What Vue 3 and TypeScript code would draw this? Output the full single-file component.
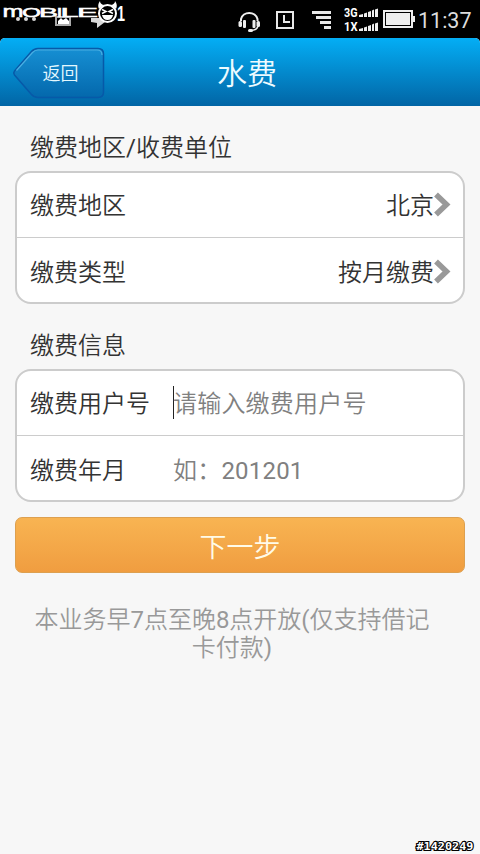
<script setup lang="ts">
import { ref } from 'vue'

interface Choice {
  label: string
  value: string
}
interface Field {
  label: string
  hint: string
  active: boolean
}
interface Letter {
  char: string
  x: number
  width: number
  size: number
}

const choices = ref<Choice[]>([
  { label: '缴费地区', value: '北京' },
  { label: '缴费类型', value: '按月缴费' },
])
const fields = ref<Field[]>([
  { label: '缴费用户号', hint: '请输入缴费用户号', active: true },
  { label: '缴费年月', hint: '如：201201', active: false },
])
const networks: string[] = ['3G', '1X']
const brand: Letter[] = [
  { char: 'm', x: 2.5, width: 21, size: 16.5 },
  { char: 'O', x: 22, width: 19, size: 12.5 },
  { char: 'B', x: 39, width: 19, size: 12.5 },
  { char: 'I', x: 56.5, width: 6, size: 12.5 },
  { char: 'L', x: 60.5, width: 18, size: 12.5 },
  { char: 'E', x: 77, width: 21, size: 12.5 },
]
</script>

<template>
  <div class="screen">
    <div class="status">
      <svg class="logo" width="130" height="30" viewBox="0 0 130 30">
        <g fill="#d8d8d8">
          <circle cx="18" cy="19" r="2" /><circle cx="26" cy="19" r="2" /><circle cx="34" cy="19" r="2" />
          <path d="M91 18h10l4 4-4 3-4 3v-5l-6-1z" />
        </g>
        <path d="M56 17h14v8H56z" fill="none" stroke="#aaa" stroke-width="2" />
        <path d="M58 24v-3l3-3 2 2 3-2 3 3v3z" fill="#fff" />
        <text
          v-for="l in brand"
          :key="l.char"
          class="brand"
          :x="l.x"
          y="17"
          :font-size="l.size"
          :textLength="l.width"
          lengthAdjust="spacingAndGlyphs"
        >{{ l.char }}</text>
        <circle cx="107.500" cy="13.500" r="8.500" fill="#000" stroke="#fff" stroke-width="2" />
        <path d="M99 9q-2-4 1-8 0 3 4 4M116 9q2-4-1-8 0 3-4 4" fill="#fff" />
        <path d="M102 9.500l4 2-4 2M113 9.500l-4 2 4 2" fill="none" stroke="#fff" stroke-width="1.500" />
        <path d="M102 15h11q-1 5-5.500 5t-5.500-5z" fill="#fff" />
        <text class="one" x="117" y="20.500" textLength="8" lengthAdjust="spacingAndGlyphs">1</text>
      </svg>
      <div class="tray">
        <svg class="headset" width="24" height="24" viewBox="0 0 24 24" fill="none" stroke="#eee">
          <path d="M3 12V10a8.500 8 0 0 1 16.500 0v2" stroke-width="2" />
          <path d="M20 16q0 5-7 5.500" stroke-width="1.500" />
          <rect x="0.500" y="12" width="3.500" height="6" rx="1.500" fill="#eee" stroke="none" />
          <rect x="5" y="11" width="3" height="8" rx="1" fill="#eee" stroke="none" />
          <rect x="14.500" y="11" width="3" height="8" rx="1" fill="#eee" stroke="none" />
          <rect x="18.500" y="12" width="3.500" height="6" rx="1.500" fill="#eee" stroke="none" />
          <rect x="10" y="20" width="5" height="3" rx="1.500" fill="#eee" stroke="none" />
        </svg>
        <svg class="clock" width="18" height="18" viewBox="0 0 18 18" fill="none" stroke="#e8e8e8" stroke-width="2">
          <path d="M1 1h16v16H1zM8 4v7h6" />
        </svg>
        <svg class="bars" width="20" height="18" viewBox="0 0 20 18" fill="#e8e8e8">
          <path d="M0 0h19v3H0zM4 5h15v3H4zM8 10h11v3H8zM12 15h7v3h-7z" />
        </svg>
        <div class="nets">
          <div v-for="n in networks" :key="n" class="net">
            <svg width="36" height="14" viewBox="0 0 36 14">
              <text class="net-name" x="0" y="11" textLength="13.500" lengthAdjust="spacingAndGlyphs">{{ n }}</text>
              <path d="M15 11v-2l4-1v3zM20 11V7.500l3-1V11zM24 11V6l3-1v6zM28 11V4.500l2-1V11zM31 11V3.500l3-1V11z" fill="#eee" />
            </svg>
          </div>
        </div>
        <svg class="battery" width="32" height="18" viewBox="0 0 32 18">
          <path d="M1 1h28v16H1z" fill="none" stroke="#eee" stroke-width="2" />
          <path d="M3 3h24v12H3zM29 6h3v6h-3z" fill="#eee" />
          <path d="M2.500 2.500h25v13h-25z" fill="none" stroke="#000" />
        </svg>
        <span class="time">11:37</span>
      </div>
    </div>

    <header class="header">
      <button class="back" type="button">
        <svg class="back-shape" width="94" height="54" viewBox="0 0 94 54">
          <defs>
            <linearGradient id="backFill" x1="0" y1="0" x2="0" y2="1">
              <stop offset="0" stop-color="#168fd3" />
              <stop offset="1" stop-color="#0468ac" />
            </linearGradient>
          </defs>
          <path d="M2.500 25Q1 27 2.500 29L19 48Q22 51.500 26 51.500H86Q91.500 51.500 91.500 46V8Q91.500 2.500 86 2.500H26Q22 2.500 19 6Z" fill="url(#backFill)" stroke="#0759a8" stroke-width="1.500" />
          <path d="M4.500 24.500L20.500 6.500Q23 4 26 4H85Q90 4 90 9" fill="none" stroke="#49aee2" stroke-width="1.200" />
        </svg>
        <span class="back-text">返回</span>
      </button>
      <h1 class="title">水费</h1>
    </header>

    <main class="content">
      <h2 class="caption">缴费地区/收费单位</h2>
      <section class="card">
        <div v-for="c in choices" :key="c.label" class="row">
          <span class="label">{{ c.label }}</span>
          <span class="value">{{ c.value }}</span>
          <svg class="chevron" width="17" height="26" viewBox="0 0 17 26">
            <path d="M2 2.500L12.500 12.500 2 22.500" fill="none" stroke="#999" stroke-width="5.500" />
          </svg>
        </div>
      </section>

      <h2 class="caption">缴费信息</h2>
      <section class="card">
        <div v-for="f in fields" :key="f.label" class="row">
          <span class="label field-label">{{ f.label }}</span>
          <span v-if="f.active" class="caret"></span>
          <span class="hint">{{ f.hint }}</span>
        </div>
      </section>

      <button class="next" type="button">下一步</button>
      <p class="note">本业务早7点至晚8点开放(仅支持借记<br />卡付款)</p>
    </main>

    <footer class="stamp">
      <svg width="66" height="16" viewBox="0 0 66 16">
        <text class="stamp-text" x="2.500" y="12" textLength="57" lengthAdjust="spacingAndGlyphs">#1420249</text>
      </svg>
    </footer>
  </div>
</template>

<style>
body {
  background: #000;
}
</style>

<style scoped>
.screen {
  width: 480px;
  height: 854px;
  overflow: hidden;
  display: flex;
  flex-direction: column;
  background: #f7f7f7;
  color: #333;
  font-family: Roboto, 'Noto Sans CJK SC DemiLight', 'Noto Sans CJK SC', sans-serif;
  font-weight: 400;
}
svg {
  display: block;
  flex: none;
}
button {
  font: inherit;
  border: 0;
  padding: 0;
}
.status {
  height: 38px;
  flex: none;
  display: flex;
  justify-content: space-between;
  background: #000;
}
.brand {
  font-family: 'Liberation Sans', sans-serif;
  fill: #fff;
  stroke: #fff;
  stroke-width: 0.5px;
}
.one {
  font: 700 22px 'Liberation Sans', sans-serif;
  fill: #fff;
}
.tray {
  width: 242px;
  display: flex;
}
.headset {
  margin-top: 9px;
}
.clock {
  margin: 11px 0 0 14px;
}
.bars {
  margin: 11px 0 0 18px;
}
.nets {
  width: 36px;
  margin: 6px 0 0 12px;
}
.net {
  height: 14px;
}
.net-name {
  font: 700 12px Roboto, sans-serif;
  fill: #fff;
}
.battery {
  margin: 10px 0 0 3px;
}
.time {
  margin-left: 3px;
  font-size: 21.5px;
  line-height: 42px;
  color: #ddd;
}
.header {
  height: 68px;
  flex: none;
  display: grid;
  grid-template-columns: 110px 1fr 96px;
  align-items: center;
  background: linear-gradient(#04aef5, #0265a5);
  border-radius: 5px 5px 0 0;
  box-shadow: 0 -5px 0 #000;
  color: #edfbff;
}
.back {
  display: grid;
  margin-left: 12px;
  margin-top: -1px;
  width: 94px;
  height: 54px;
  background: none;
  color: #e4f8ff;
}
.back > * {
  grid-area: 1 / 1;
}
.back-text {
  font-size: 18px;
  line-height: 54px;
  padding: 1px 0 0 3px;
}
.title {
  margin: 0;
  padding-top: 2px;
  text-align: center;
  font-size: 30px;
  font-weight: 400;
  line-height: 68px;
}
.content {
  flex: 1;
  padding: 0 15px;
}
.caption {
  margin: 22px 15px 3px;
  height: 40px;
  line-height: 40px;
  font-size: 24px;
  font-weight: 400;
}
.card {
  height: 133px;
  box-sizing: border-box;
  border: 2px solid #ccc;
  border-radius: 16px;
  background: #fff;
}
.row {
  display: flex;
  align-items: center;
  height: 64px;
  padding: 3px 12px 0 13px;
  box-sizing: border-box;
  font-size: 24px;
  line-height: 35px;
}
.row + .row {
  height: 65px;
  padding-top: 6px;
  border-top: 1px solid #ccc;
}
.value {
  margin-left: auto;
}
.chevron {
  margin-top: -3px;
}
.field-label {
  width: 143px;
}
.caret {
  width: 1px;
  height: 33px;
  margin: -4px -1px 0 0;
  background: #222;
}
.hint {
  color: #808080;
  letter-spacing: 0.2px;
}
.next {
  display: block;
  width: 450px;
  height: 56px;
  margin-top: 15px;
  box-sizing: border-box;
  border: 1px solid #dda050;
  border-radius: 7px;
  background: linear-gradient(#f8b452, #f09d40);
  color: #fffbe8;
  font-size: 27px;
}
.note {
  margin: 33px 0 0;
  padding-right: 16px;
  text-align: center;
  font-size: 24px;
  line-height: 28px;
  color: #999;
}
.stamp {
  height: 16px;
  display: flex;
  justify-content: flex-end;
}
.stamp-text {
  font: 700 11px 'DejaVu Sans Mono', monospace;
  fill: #fff;
  stroke: #000;
  stroke-width: 2.2px;
  paint-order: stroke;
}
</style>
